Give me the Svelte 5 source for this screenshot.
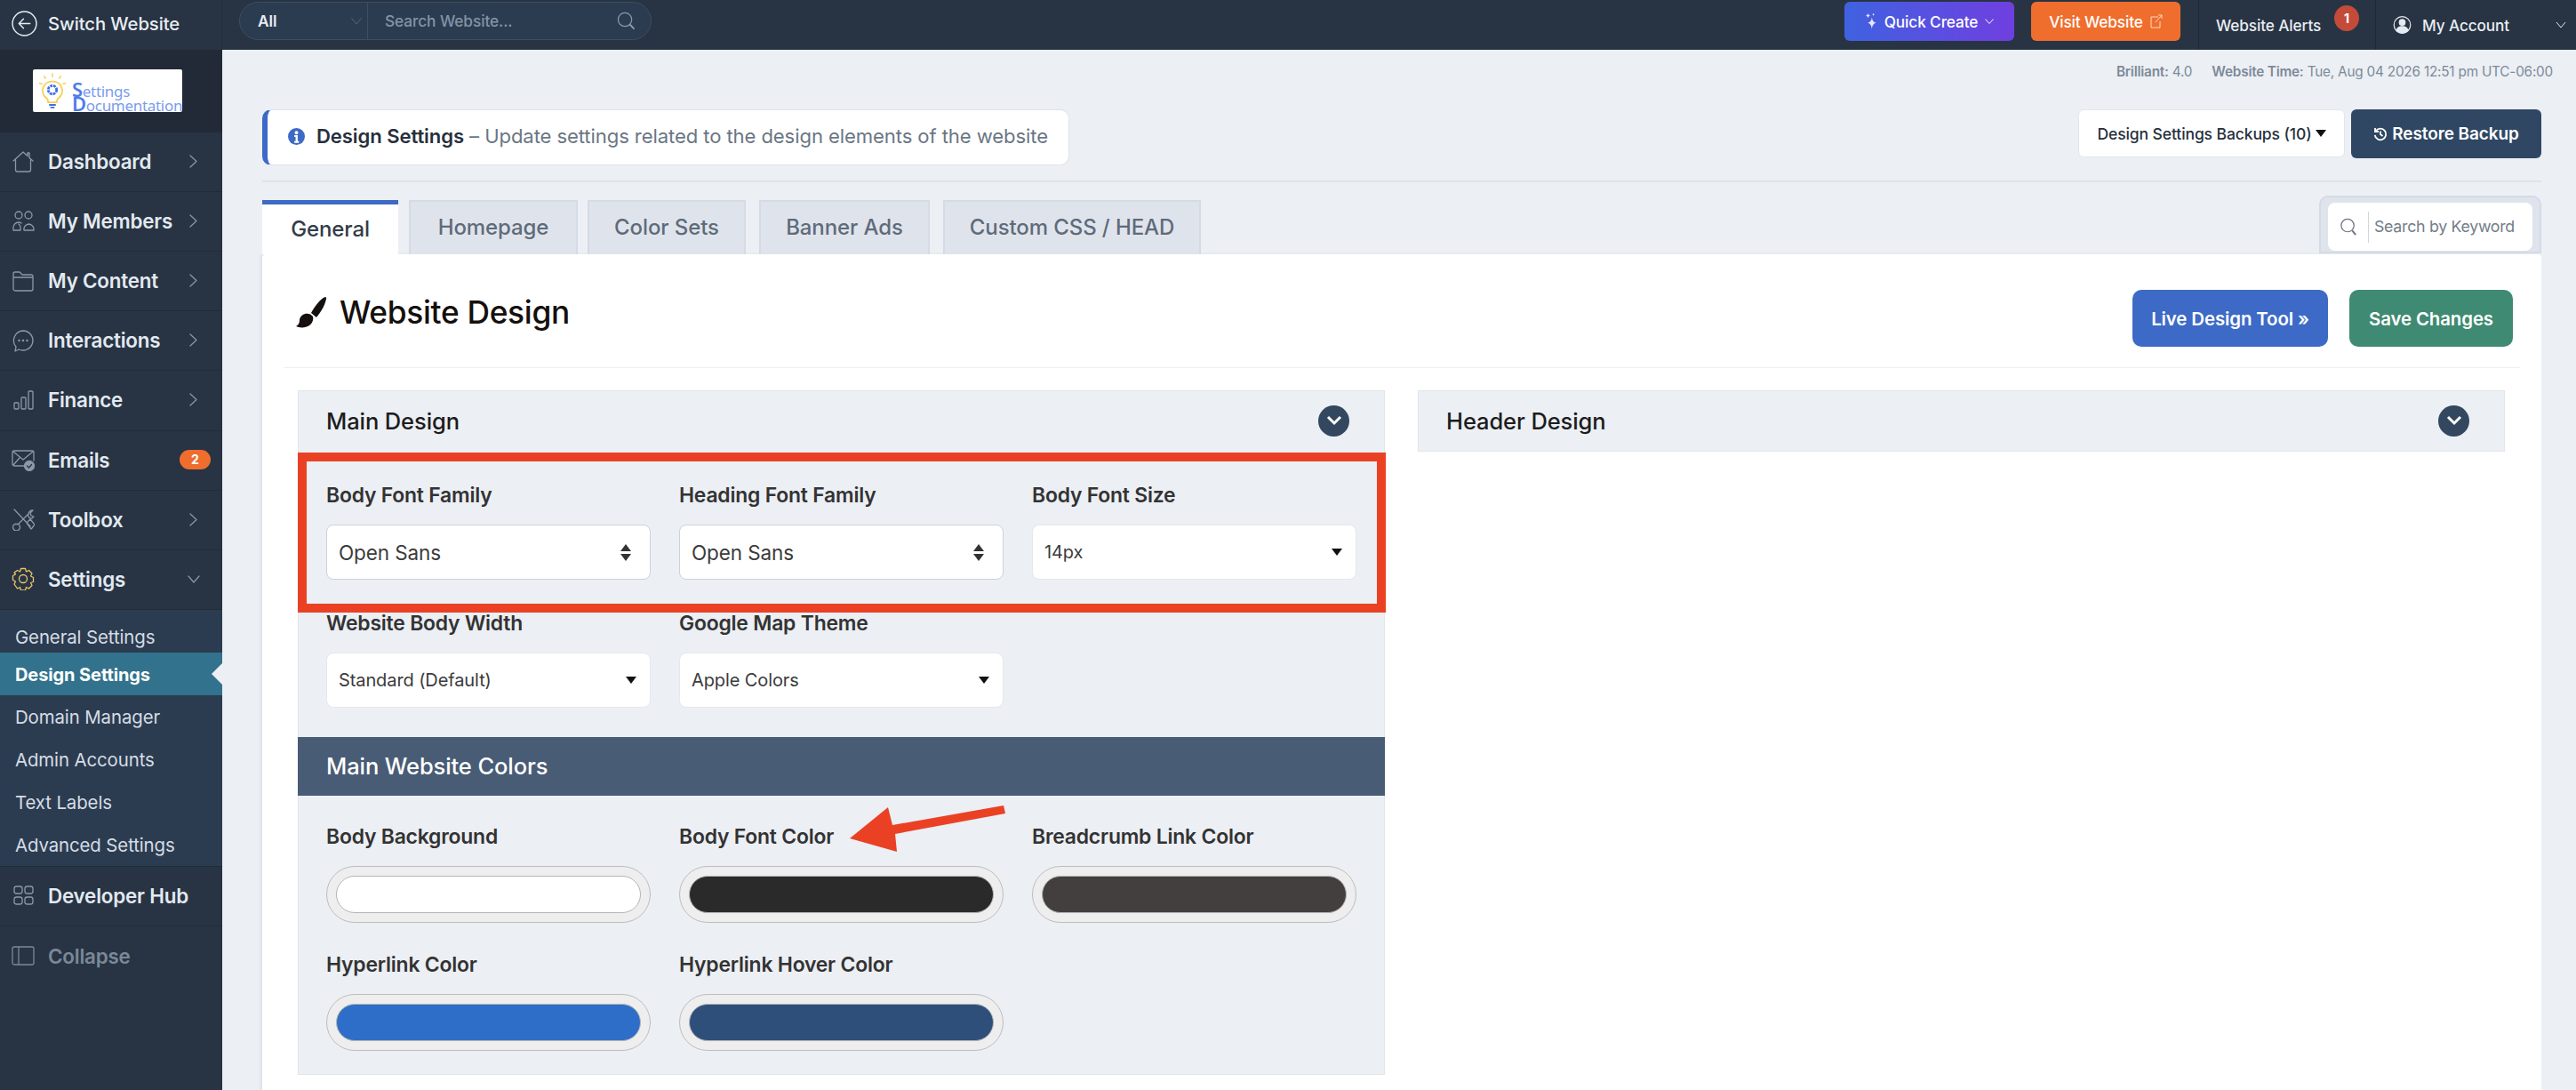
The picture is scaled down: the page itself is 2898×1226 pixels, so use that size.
<script>
  const menu = [
    { label: 'Dashboard', icon: 'home' },
    { label: 'My Members', icon: 'users' },
    { label: 'My Content', icon: 'folder' },
    { label: 'Interactions', icon: 'chat' },
    { label: 'Finance', icon: 'bars' },
    { label: 'Emails', icon: 'mail', badge: '2' },
    { label: 'Toolbox', icon: 'tools' },
    { label: 'Settings', icon: 'gear', open: true }
  ];
  const sub = ['General Settings', 'Design Settings', 'Domain Manager', 'Admin Accounts', 'Text Labels', 'Advanced Settings'];
  const tabs = ['General', 'Homepage', 'Color Sets', 'Banner Ads', 'Custom CSS / HEAD'];
  const selects = [
    { label: 'Body Font Family', value: 'Open Sans', kind: 'native' },
    { label: 'Heading Font Family', value: 'Open Sans', kind: 'native' },
    { label: 'Body Font Size', value: '14px', kind: 'plain' },
    { label: 'Website Body Width', value: 'Standard (Default)', kind: 'plain' },
    { label: 'Google Map Theme', value: 'Apple Colors', kind: 'plain' }
  ];
  const colors = [
    { label: 'Body Background', value: '#ffffff' },
    { label: 'Body Font Color', value: '#2a2a2a' },
    { label: 'Breadcrumb Link Color', value: '#433f3f' },
    { label: 'Hyperlink Color', value: '#2f6ec8' },
    { label: 'Hyperlink Hover Color', value: '#2e4f7a' }
  ];
</script>

{#snippet icon(name)}
  <svg class="mi" class:gold={name === 'gear'} viewBox="0 0 26 26" width="26" height="26" fill="none" stroke="currentColor" stroke-width="1.3" stroke-linejoin="round" stroke-linecap="round">
    {#if name === 'home'}
      <path d="M2 12 13 2l5 4.500V3h2v5.500L24 12M4.500 10.500V22a2 2 0 0 0 2 2h13a2 2 0 0 0 2-2V10.500" />
    {:else if name === 'users'}
      <circle cx="8" cy="6" r="4" /><circle cx="19" cy="6" r="4" />
      <path d="M2 23v-3a6 6 0 0 1 6-6 5 5 0 0 1 3 1M2 23h8v-3a5 5 0 0 0-2-4M14 23h11v-1a6 6 0 0 0-6-6 6 6 0 0 0-5 7Z" />
    {:else if name === 'folder'}
      <path d="M2 5a2 2 0 0 1 2-2h5l3 3h10a2 2 0 0 1 2 2v14a2 2 0 0 1-2 2H4a2 2 0 0 1-2-2ZM2 9h22" />
    {:else if name === 'chat'}
      <path d="M13 2a11 11 0 0 1 0 22 11 11 0 0 1-5-1l-4 2 1-5a11 11 0 0 1 8-18Z" />
      <circle cx="8.500" cy="13" r=".6" /><circle cx="13" cy="13" r=".6" /><circle cx="17.500" cy="13" r=".6" />
    {:else if name === 'bars'}
      <rect x="3" y="16" width="5" height="7" rx="1" /><rect x="11" y="10" width="5" height="13" rx="1" /><rect x="19" y="3" width="5" height="20" rx="1" />
    {:else if name === 'mail'}
      <path d="M15 20H3a2 2 0 0 1-2-2V5a2 2 0 0 1 2-2h20a2 2 0 0 1 2 2v9M2 4l11 9 11-9M2 19l7-8" />
      <circle cx="20" cy="20" r="5.500" fill="currentColor" /><path d="m17.500 20 2 2 3-3.500" stroke="#283443" />
    {:else if name === 'tools'}
      <path d="M3 2l18 19M8 18l11-11M19 7a5 5 0 0 1 5-4l-3 3 1 3 3 1-2 2c-2 .5-5-1-4-5ZM7.500 18.500a4 4 0 1 1-4 0ZM17 17l4-4 5 6-3 4-1 1Z" />
    {:else if name === 'gear'}
      <circle cx="13" cy="13" r="4.500" />
      <path d="M10.500 1.500h5l1 3.500 3-1.500 3.500 3.500-1.500 3 3 1.500v5l-3 1 1.500 3-3.500 3.500-3-1.500-1 3.500h-5l-1-3.500-3 1.500L3 19l1.500-3-3-1.500v-5l3-1.500L3 6l3.500-2.500 3 1.500Z" />
    {/if}
  </svg>
{/snippet}

{#snippet chevronRight()}
  <svg viewBox="0 0 9 15" width="9" height="15" fill="none" stroke="currentColor" stroke-width="1.2" stroke-linecap="round" stroke-linejoin="round" class="chev"><path d="M1 1 8 7.500 1 14" /></svg>
{/snippet}
{#snippet chevronDown()}
  <svg viewBox="0 0 14 9" width="14" height="9" fill="none" stroke="currentColor" stroke-width="1.2" stroke-linecap="round" stroke-linejoin="round" class="chev down"><path d="M1 1 7 8l6-7" /></svg>
{/snippet}

<div class="page">
  <header class="topbar">
    <div class="switch">
      <svg viewBox="0 0 28 28" width="29" height="29" fill="none" stroke="#e8edf3" stroke-width="1.4" stroke-linecap="round" stroke-linejoin="round"><circle cx="14" cy="14" r="13" /><path d="M20 14H8m5-5-5 5 5 5" /></svg>
      <span>Switch Website</span>
    </div>
    <div class="topsearch">
      <div class="scope"><span>All</span>
        <svg viewBox="0 0 12 8" width="12" height="8" fill="none" stroke="#56677b" stroke-width="1"><path d="M.5 .5 6 7l5.500-6.500" /></svg>
      </div>
      <div class="query"><span>Search Website...</span>
        <svg viewBox="0 0 22 22" width="21" height="21" fill="none" stroke="#8c9aab" stroke-width="1.300"><circle cx="9.500" cy="9.500" r="8" /><path d="m15.500 15.500 5 5" stroke-width="2" /></svg>
      </div>
    </div>
    <div class="topright">
      <div class="tbtn quick">
        <svg viewBox="0 0 16 24" width="14" height="22" fill="#e9e6ff"><path d="M9 7c.5 4 2 6 5.500 7C11 15 9.500 17 9 22c-.5-5-2-7-5.500-8C7 13 8.500 11 9 7ZM4 1c.2 2 1 3 3 3.500C5 5 4.200 6 4 8 3.800 6 3 5 1 4.500 3 4 3.800 3 4 1ZM11 1c.1 1 .5 1.600 1.500 2-1 .3-1.400 1-1.500 2-.1-1-.5-1.700-1.500-2 1-.4 1.400-1 1.500-2Z" /></svg>
        <span>Quick Create</span>
        <svg viewBox="0 0 10 6" width="10" height="6" fill="none" stroke="#fff" stroke-width="1"><path d="M.5 .5 5 5.500 9.500 .5" /></svg>
      </div>
      <div class="tbtn visit">
        <span>Visit Website</span>
        <svg viewBox="0 0 14 16" width="14" height="16" fill="none" stroke="#ffd9c4" stroke-width="1"><path d="M9 3H1v12h10V8M6 9l7-8M9 1h4v4" /></svg>
      </div>
      <div class="alerts"><span>Website Alerts</span><b>1</b></div>
      <div class="account">
        <svg viewBox="0 0 22 28" width="21" height="26" fill="none" stroke="#e6ebf1" stroke-width="1.300"><circle cx="11" cy="14" r="10" /><circle cx="11" cy="11" r="3.500" fill="#e6ebf1" /><path d="M4 21c1-4 4-5 7-5s6 1 7 5c-4 4-10 4-14 0Z" fill="#e6ebf1" /></svg>
        <span>My Account</span>
        <svg class="acc-chev" viewBox="0 0 12 8" width="12" height="8" fill="none" stroke="#e6ebf1" stroke-width="1"><path d="M1 1 6 7l5-6" /></svg>
      </div>
    </div>
  </header>

  <div class="shell">
    <aside class="sidebar">
      <div class="logo-band">
        <div class="logo">
          <svg viewBox="0 0 34 46" width="32" height="44" fill="none">
            <path d="M17 12a11 11 0 0 0-7 20c1 1 2 3 2 5h10c0-2 1-4 2-5a11 11 0 0 0-7-20Z" stroke="#f6cf52" stroke-width="2" />
            <circle cx="17" cy="22" r="5" stroke="#3f6fe0" stroke-width="3" stroke-dasharray="3 1" />
            <path d="M13 40h8M14.500 43h5" stroke="#3f6fe0" stroke-width="2" />
            <path d="M17 2v5M7 5l2 4M27 5l-2 4M1 14l4 1M33 14l-4 1" stroke="#f6cf52" stroke-width="1.500" />
          </svg>
          <div class="logo-text">
            <div class="l1"><b>S</b>ettings</div>
            <div class="l2"><b>D</b>ocumentation</div>
          </div>
        </div>
      </div>
      {#each menu as m}
        <div class="item">
          {@render icon(m.icon)}
          <span class="label">{m.label}</span>
          {#if m.badge}<em class="badge">{m.badge}</em>{:else if m.open}{@render chevronDown()}{:else}{@render chevronRight()}{/if}
        </div>
      {/each}
      <nav class="submenu">
        {#each sub as s, i}
          <div class="subitem" class:active={i === 1}>{s}</div>
        {/each}
      </nav>
      <div class="item dev">
        <svg class="mi" viewBox="0 0 26 26" width="26" height="26" fill="none" stroke="currentColor" stroke-width="1.300"><rect x="3" y="3" width="9" height="8" rx="2.500" /><rect x="15" y="3" width="9" height="8" rx="2.500" /><rect x="3" y="15" width="9" height="8" rx="2.500" /><rect x="15" y="15" width="9" height="8" rx="2.500" /></svg>
        <span class="label">Developer Hub</span>
      </div>
      <div class="item collapse">
        <svg class="mi" viewBox="0 0 26 26" width="26" height="26" fill="none" stroke="currentColor" stroke-width="1.300"><rect x="1" y="3" width="24" height="20" rx="2" /><path d="M8 3v20" /></svg>
        <span class="label">Collapse</span>
      </div>
    </aside>

    <main class="main">
      <div class="meta"><b>Brilliant:</b> 4.0 <b class="gap">Website Time:</b> Tue, Aug 04 2026 12:51 pm UTC-06:00</div>
      <div class="headrow">
        <div class="notice">
          <svg viewBox="0 0 20 20" width="19" height="19"><circle cx="10" cy="10" r="10" fill="#3d6ac6" /><circle cx="10" cy="5.500" r="2" fill="#fff" /><path d="M7.500 8.500h4v7h1.500v2H7.500v-2H9v-5H7.500Z" fill="#fff" /></svg>
          <span><b>Design Settings</b> – Update settings related to the design elements of the website</span>
        </div>
        <div class="headbtns">
          <div class="backups">Design Settings Backups (10) <i class="tri"></i></div>
          <div class="restore">
            <svg viewBox="0 0 16 16" width="16" height="16" fill="none" stroke="#fff" stroke-width="1.800"><path d="M3 4a6.300 6.300 0 1 1-1.300 5M2 1v4h4M8 4.500V8l2.500 2" /></svg>
            Restore Backup
          </div>
        </div>
      </div>
      <div class="rule"></div>
      <div class="tabrow">
        {#each tabs as t, i}
          <div class="tab" class:on={i === 0}>{t}</div>
        {/each}
        <div class="kw">
          <div class="kw-in">
            <svg viewBox="0 0 20 22" width="20" height="21" fill="none" stroke="#6d7480" stroke-width="1.300"><circle cx="9" cy="9" r="7.500" /><path d="m14.500 15 4 5" stroke-width="2" /></svg>
            <span>Search by Keyword</span>
          </div>
        </div>
      </div>

      <section class="card">
        <div class="cardhead">
          <h1>
            <svg viewBox="0 0 35 36" width="35" height="36" fill="#15100d"><path d="M34 1c1 0 1 1 1 2-1 6-5 14-11 21l-6-5c4-7 10-16 16-18ZM11 20c3-1 7 0 9 3 1 4-1 8-4 10-4 3-11 3-15 1 2-1 4-3 4-7 0-3 3-6 6-7Z" /></svg>
            Website Design
          </h1>
          <div class="cardbtns"><div class="live">Live Design Tool »</div><div class="save">Save Changes</div></div>
        </div>
        <div class="columns">
          <div class="panel left">
            <div class="panelhead"><span>Main Design</span><i class="circle"><svg viewBox="0 0 18 12" width="18" height="12" fill="none" stroke="#fff" stroke-width="3"><path d="M2 2l7 7 7-7" /></svg></i></div>
            <div class="fields selects">
              {#each selects as s}
                <div class="field">
                  <div class="flabel">{s.label}</div>
                  <div class="select" class:native={s.kind === 'native'}>
                    <span>{s.value}</span>
                    {#if s.kind === 'native'}<i class="updown"></i>{:else}<i class="tri"></i>{/if}
                  </div>
                </div>
              {/each}
              <div class="redbox"></div>
            </div>
            <div class="band">Main Website Colors</div>
            <div class="fields colors">
              {#each colors as c}
                <div class="field">
                  <div class="flabel">{c.label}</div>
                  <div class="swatch"><div class="swatch-in" style:background={c.value}></div></div>
                </div>
              {/each}
              <svg class="arrow" viewBox="0 0 180 56" width="180" height="56"><path d="M0 37 43 2l5 20L173 0l2 9L51 32l2 20Z" fill="#ea4125" /></svg>
            </div>
          </div>
          <div class="panel right">
            <div class="panelhead"><span>Header Design</span><i class="circle"><svg viewBox="0 0 18 12" width="18" height="12" fill="none" stroke="#fff" stroke-width="3"><path d="M2 2l7 7 7-7" /></svg></i></div>
          </div>
        </div>
      </section>
    </main>
  </div>
</div>

<style>
  :global(body) { margin: 0; background: #eceff4; }
  .page { width: 2898px; height: 1226px; overflow: hidden; font-family: Inter, "Noto Sans", sans-serif; color: #333; font-weight: 500; letter-spacing: -.1px; }
  svg { flex: none; display: block; }
  i, em { font-style: normal; }

  .topbar { height: 56px; background: #283443; display: flex; align-items: center; color: #e8edf3; }
  .switch { width: 250px; height: 56px; box-sizing: border-box; border-right: 1px solid #222c39; display: flex; align-items: center; gap: 12px; padding: 0 0 4px 13px; font-size: 20.3px; font-weight: 500; }
  .topsearch { margin: 0 0 9px 19px; width: 464px; height: 43px; box-sizing: border-box; display: flex; background: #2c3c50; border: 1px solid #3d4e62; border-radius: 22px; font-size: 17.3px; }
  .scope { width: 144px; box-sizing: border-box; display: flex; align-items: center; justify-content: space-between; padding: 0 6px 0 20px; border-right: 1px solid #3d4e62; font-weight: 600; }
  .query { flex: 1; display: flex; align-items: center; justify-content: space-between; padding: 0 17px 0 19px; color: #8393a6; }
  .topright { margin-left: auto; display: flex; align-items: center; height: 56px; font-size: 17.2px; }
  .tbtn { height: 44px; margin-bottom: 8px; border-radius: 6px; color: #fff; display: flex; align-items: center; justify-content: center; box-sizing: border-box; font-weight: 500; gap: 8px; }
  .quick { width: 191px; background: linear-gradient(90deg, #3f62e0, #6f3fe0); }
  .visit { width: 168px; margin-left: 19px; background: #ef6e2d; }
  .alerts { margin-left: 20px; width: 200px; height: 56px; box-sizing: border-box; border-left: 1px solid #1f2934; border-right: 1px solid #1f2934; display: flex; align-items: center; padding-left: 19px; position: relative; font-weight: 500; }
  .alerts b { position: absolute; left: 152px; top: 6px; width: 28px; height: 29px; border-radius: 50%; background: #c44a3a; color: #fff; font-size: 14px; display: grid; place-items: center; }
  .account { width: 225px; box-sizing: border-box; padding-left: 19px; display: flex; align-items: center; gap: 12px; font-weight: 500; }
  .acc-chev { margin-left: auto; margin-right: 11px; }

  .shell { display: flex; height: 1170px; }
  .sidebar { width: 250px; flex: none; background: #283443; color: #e2e9f1; }
  .logo-band { height: 93px; background: #212a36; display: flex; align-items: center; justify-content: center; box-sizing: border-box; }
  .logo { width: 168px; height: 48px; margin-right: 8px; margin-bottom: 1px; box-sizing: border-box; background: #fff; border-radius: 2px; display: flex; padding: 2px 0 0 6px; gap: 6px; color: #7a9cf0; }
  .logo-text { font-size: 17px; font-weight: 400; margin-top: 12px; font-family: "Noto Sans", sans-serif; letter-spacing: -.3px; white-space: nowrap; }
  .logo-text div { height: 16px; line-height: 16px; }
  .logo-text b { font-size: 22px; color: #4f7bea; font-weight: 600; line-height: 16px; }
  .item { height: 67.12px; box-sizing: border-box; border-bottom: 1px solid #222c39; display: flex; align-items: center; padding: 0 28px 1px 13px; gap: 15px; font-size: 22.4px; font-weight: 600; position: relative; letter-spacing: -.2px; }
  .label { flex: 1; white-space: nowrap; }
  .mi { color: #8b98a8; }
  .mi.gold { color: #e9c46a; }
  .chev { color: #8b98a8; }
  .chev.down { margin-right: -3px; }
  .badge { position: absolute; right: 13px; top: 21px; width: 35px; height: 22px; background: #ef6e2d; border-radius: 11px; color: #fff; font-size: 14px; font-weight: 700; display: grid; place-items: center; letter-spacing: 0; }
  .submenu { background: #2c3c50; border-bottom: 1px solid #222c39; height: 288px; }
  .subitem { height: 48px; display: flex; align-items: center; padding: 2px 0 0 17px; box-sizing: border-box; font-size: 20.4px; font-weight: 400; color: #d5dde6; position: relative; white-space: nowrap; }
  .subitem:first-child { padding-top: 14px; }
  .subitem.active { background: #32728c; color: #fff; font-weight: 700; font-size: 20px; }
  .subitem.active::after { content: ""; position: absolute; right: 0; top: 12px; border: 12px solid transparent; border-left-width: 0; border-right-color: #eceff4; }
  .item.collapse { border: 0; color: #7b8897; }
  .item.collapse .mi { color: #7b8897; }

  .main { width: 2648px; box-sizing: border-box; padding: 0 39px 0 45px; }
  .meta { height: 67px; box-sizing: border-box; padding: 15px 0 0; margin-right: -13px; text-align: right; font-size: 15.3px; color: #7d8a99; font-weight: 400; white-space: nowrap; letter-spacing: -.2px; }
  .meta b { font-weight: 600; }
  .meta .gap { margin-left: 18px; }
  .headrow { display: flex; justify-content: space-between; height: 80px; }
  .notice { width: 908px; height: 63px; box-sizing: border-box; background: #fff; border: 1px solid #dfe3e9; border-left: 6px solid #3d6ac6; border-radius: 10px; display: flex; align-items: center; gap: 13px; padding: 0 0 3px 23px; font-size: 22.100px; color: #6b7684; font-weight: 400; white-space: nowrap; }
  .notice b { color: #27303c; font-weight: 600; }
  .headbtns { display: flex; gap: 7px; align-items: flex-start; }
  .backups { width: 300px; height: 54px; box-sizing: border-box; background: #fff; border: 1px solid #e2e5ea; border-radius: 6px; font-size: 17.500px; color: #27303c; display: flex; align-items: center; justify-content: center; gap: 4px; white-space: nowrap; }
  .restore { width: 214px; height: 55px; border-radius: 6px; background: #2f4763; color: #fff; font-size: 19px; font-weight: 600; display: flex; align-items: center; justify-content: center; gap: 5px; }
  .rule { height: 2px; background: #dfe3e9; }
  .tabrow { display: flex; height: 81px; align-items: flex-end; gap: 11px; position: relative; }
  .tab { height: 61px; box-sizing: border-box; background: #dfe4ec; border: 2px solid #d4dbe5; border-bottom: 0; display: flex; align-items: center; justify-content: center; font-size: 24px; color: #5f6b7a; padding: 0 0 2px; white-space: nowrap; }
  .tab:nth-child(1) { width: 153px; background: #fff; border: 0; border-top: 5px solid #3d6ac6; color: #333c48; }
  .tab:nth-child(2) { width: 190px; margin-left: 1px; }
  .tab:nth-child(3) { width: 178px; }
  .tab:nth-child(4) { width: 192px; margin-left: 4px; }
  .tab:nth-child(5) { width: 290px; margin-left: 4px; }
  .kw { position: absolute; right: 0; top: 15px; width: 250px; height: 65px; box-sizing: border-box; background: #dfe4ec; border: 2px solid #d4dbe5; border-radius: 10px 10px 0 0; padding: 6px 8px 0; }
  .kw-in { background: #fff; height: 54px; border-radius: 8px; display: flex; align-items: center; gap: 12px; padding-left: 13px; font-size: 17.800px; font-weight: 400; color: #737d89; white-space: nowrap; }
  .kw-in span { border-left: 1px solid #d3d6db; padding: 6px 0 8px 6px; letter-spacing: -.3px; }

  .card { background: #fff; height: 940px; border-radius: 4px 4px 0 0; padding: 0 24px; box-shadow: -2px 0 3px rgba(160,170,185,.2); }
  .cardhead { height: 128px; box-sizing: border-box; border-bottom: 1px solid #eceff4; display: flex; justify-content: space-between; padding: 40px 8px 0 13px; }
  h1 { margin: 0; height: 50px; font-size: 35.300px; font-weight: 500; color: #15100d; display: flex; align-items: center; gap: 15px; letter-spacing: -.3px; }
  .cardbtns { display: flex; gap: 24px; }
  .live, .save { height: 64px; border-radius: 10px; color: #fff; font-size: 20.400px; font-weight: 600; display: grid; place-items: center; white-space: nowrap; }
  .live { width: 220px; background: #3d6ac6; }
  .save { width: 184px; background: #3f8a72; }

  .columns { display: grid; grid-template-columns: 1223px 1223px; gap: 37px; margin: 25px 0 0 16px; }
  .panel { background: #eceff4; box-shadow: inset 0 0 0 1px #e2e5ea; }
  .panel.right { height: 69px; }
  .panel.left { height: 770px; }
  .panelhead { height: 68px; display: flex; align-items: center; justify-content: space-between; padding: 0 40px 2px 32px; font-size: 25.500px; color: #1d1d1d; font-weight: 500; }
  .circle { width: 35px; height: 35px; border-radius: 50%; background: #33475f; display: grid; place-items: center; }
  .fields { display: grid; grid-template-columns: repeat(3, 365px); column-gap: 32px; padding: 0 32px; position: relative; }
  .selects { height: 320px; padding-top: 32px; grid-auto-rows: 144px; align-content: start; box-sizing: border-box; }
  .colors { padding-top: 30px; grid-auto-rows: 144px; box-sizing: border-box; height: 318px; }
  .flabel { font-size: 22.900px; font-weight: 600; color: #333; height: 35px; line-height: 33px; white-space: nowrap; letter-spacing: -.2px; }
  .select { margin-top: 14px; height: 62px; box-sizing: border-box; background: #fff; border-radius: 8px; display: flex; align-items: center; justify-content: space-between; padding: 0 15px 0 13px; font-size: 20px; color: #3b3b3b; font-weight: 400; border: 1px solid #e4e7ec; }
  .select.native { border-color: #ccd2da; font-size: 22.500px; }
  .updown { width: 0; height: 19px; position: relative; margin-right: 12px; }
  .updown::before, .updown::after { content: ""; position: absolute; left: -6.500px; border: 6.500px solid transparent; border-top-width: 0; }
  .updown::before { top: 0; border-bottom: 8px solid #333; }
  .updown::after { bottom: 0; border-width: 8px 6.500px 0; border-top-color: #333; }
  .tri { display: inline-block; width: 0; height: 0; border: 6.500px solid transparent; border-bottom-width: 0; border-top: 8px solid #111; }
  .redbox { position: absolute; left: 0; top: 0; width: 1224px; height: 180px; box-sizing: border-box; border: 10px solid #ea4125; pointer-events: none; }
  .band { height: 64px; background: #495c75; color: #fff; display: flex; align-items: center; padding: 0 32px 2px; font-size: 25.500px; font-weight: 500; }
  .swatch { margin-top: 14px; height: 64px; box-sizing: border-box; background: #eee; border: 1px solid #bdbdbd; border-radius: 32px; padding: 10px; }
  .swatch-in { height: 42px; border-radius: 21px; border: 1px solid #b5b5b5; box-sizing: border-box; }
  .arrow { position: absolute; left: 621px; top: 11px; }
</style>
